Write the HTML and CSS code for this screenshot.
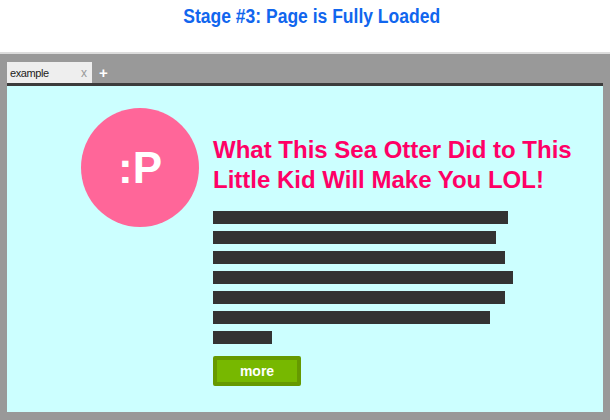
FILE: index.html
```html
<!DOCTYPE html>
<html>
<head>
<meta charset="utf-8">
<link rel="stylesheet" href="styles.css">
</head>
<body>
<header class="stage"><span class="stage-text">Stage #3: Page is Fully Loaded</span></header>
<div class="browser">
  <div class="tabbar">
    <div class="tab"><span class="tab-title">example</span><span class="tab-close">x</span></div>
    <span class="tab-new">+</span>
  </div>
  <div class="viewport">
    <div class="avatar">:P</div>
    <div class="article">
      <h1 class="headline">What This Sea Otter Did to This Little Kid Will Make You LOL!</h1>
      <div class="lines">
        <div class="line" style="width:295px"></div>
        <div class="line" style="width:283px"></div>
        <div class="line" style="width:292px"></div>
        <div class="line" style="width:300px"></div>
        <div class="line" style="width:292px"></div>
        <div class="line" style="width:277px"></div>
        <div class="line" style="width:59px"></div>
      </div>
      <button class="more">more</button>
    </div>
  </div>
</div>
</body>
</html>
```
FILE: styles.css
```css
html, body {
  margin: 0;
  padding: 0;
  background: #ffffff;
}
body {
  width: 610px;
  height: 420px;
  overflow: hidden;
  display: flex;
  flex-direction: column;
}
.stage {
  height: 52px;
  box-sizing: border-box;
  padding-top: 3px;
  text-align: center;
  font-family: "Liberation Sans", Arial, sans-serif;
  font-weight: bold;
  font-size: 20px;
  line-height: 26px;
  color: #1166ee;
}
.stage-text {
  display: inline-block;
  transform: scaleX(0.875);
  margin-left: 14px;
}
.browser {
  flex: 1;
  background: #999999;
  border-top: 2px solid #dcdcdc;
  display: flex;
  flex-direction: column;
  padding: 0 7px 8px 7px;
}
.tabbar {
  height: 29px;
  box-sizing: border-box;
  padding-top: 7px;
  display: flex;
  align-items: flex-end;
}
.tab {
  width: 85px;
  height: 21px;
  box-sizing: border-box;
  background: #eeeeee;
  display: flex;
  align-items: center;
  justify-content: space-between;
  padding: 0 5px 0 3px;
  font-family: "Liberation Sans", Arial, sans-serif;
  font-size: 11px;
}
.tab-title {
  color: #222222;
  letter-spacing: -0.4px;
}
.tab-close {
  color: #999999;
  font-size: 12px;
}
.tab-new {
  color: #ffffff;
  font-family: "Liberation Sans", Arial, sans-serif;
  font-weight: bold;
  font-size: 15px;
  line-height: 21px;
  margin-left: 7px;
}
.viewport {
  flex: 1;
  background: #ccffff;
  border-top: 3px solid #3c3c3c;
  display: flex;
  align-items: flex-start;
  padding: 22px 0 0 74px;
}
.avatar {
  width: 118px;
  height: 119px;
  border-radius: 50%;
  background: #ff6699;
  color: #ffffff;
  display: flex;
  align-items: center;
  justify-content: center;
  font-family: "Liberation Sans", Arial, sans-serif;
  font-weight: bold;
  font-size: 44px;
  flex-shrink: 0;
}
.article {
  margin-left: 14px;
  margin-top: 27px;
  display: flex;
  flex-direction: column;
  align-items: flex-start;
}
.headline {
  margin: 0;
  width: 375px;
  font-family: "Liberation Sans", Arial, sans-serif;
  font-weight: bold;
  font-size: 24px;
  line-height: 30px;
  color: #ff0066;
}
.lines {
  margin-top: 16px;
  display: flex;
  flex-direction: column;
  gap: 7px;
}
.line {
  height: 13px;
  background: #333333;
}
.more {
  margin-top: 12px;
  width: 88px;
  height: 30px;
  box-sizing: border-box;
  border: 4px solid #669900;
  border-radius: 2px;
  background: #77b800;
  color: #ffffff;
  font-family: "Liberation Sans", Arial, sans-serif;
  font-weight: bold;
  font-size: 14px;
  padding: 0;
}
```
